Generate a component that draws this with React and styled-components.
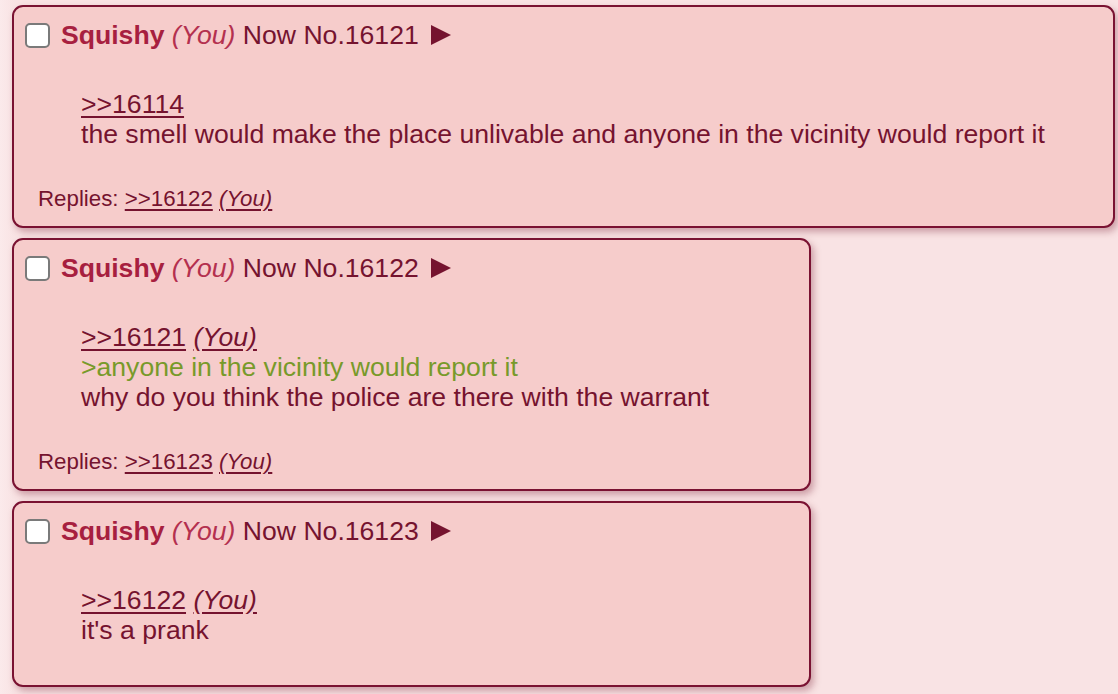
import React from "react";
import styled, { createGlobalStyle } from "styled-components";

const GlobalStyle = createGlobalStyle`
  html, body {
    margin: 0;
    padding: 0;
    background: #f9e3e4;
  }
  body {
    font-family: "Liberation Sans", Arial, sans-serif;
    color: #75132f;
  }
`;

const Thread = styled.main`
  display: flex;
  flex-direction: column;
  align-items: flex-start;
  gap: 10px;
  min-height: 100vh;
  box-sizing: border-box;
  padding: 5px 0 20px 12px;
  background: linear-gradient(90deg, #fbeaeb 0, #f9e3e4 14px);
`;

const Post = styled.article`
  box-sizing: border-box;
  width: fit-content;
  min-width: 799px;
  max-width: 1103px;
  padding: 13px 68px 14px 11px;
  background: #f6cccb;
  border: 2px solid #7a1232;
  border-radius: 11px;
  box-shadow: 3px 4px 7px rgba(120, 30, 50, 0.35);
`;

const Header = styled.header`
  display: flex;
  align-items: center;
  height: 30px;
  font-size: 26.6px;
  line-height: 30px;
  white-space: nowrap;
`;

const Check = styled.span`
  display: inline-block;
  box-sizing: border-box;
  width: 25px;
  height: 25px;
  margin-right: 11px;
  background: #fff;
  border: 2px solid #7a7a7a;
  border-radius: 5px;
`;

const Name = styled.b`
  color: #a71f40;
  font-weight: bold;
`;

const You = styled.i`
  color: ${({ dim }) => (dim ? "#b4304f" : "inherit")};
  text-decoration: ${({ link }) => (link ? "underline" : "none")};
  text-underline-offset: 3px;
`;

const Arrow = styled.svg`
  margin-left: 12px;
  flex: none;
`;

const Body = styled.blockquote`
  margin: 39px 0 26px 56px;
  font-size: 26.6px;
  line-height: 30px;
  white-space: nowrap;
`;

const Line = styled.div`
  color: ${({ quote }) => (quote ? "#789a2a" : "inherit")};
`;

const QuoteLink = styled.a`
  color: #75132f;
  text-decoration: underline;
  text-underline-offset: 3px;
  text-decoration-thickness: 2px;
`;

/* top margin collapses with the quote's bottom margin */
const Replies = styled.footer`
  margin: 37px 0 0 13px;
  font-size: 22.3px;
  line-height: 26px;
  white-space: nowrap;

  a, i {
    text-decoration-thickness: 1.5px;
  }
`;

const posts = [
  {
    no: 16121,
    quote: ">>16114",
    quoteYou: false,
    lines: [{ text: "the smell would make the place unlivable and anyone in the vicinity would report it" }],
    reply: ">>16122",
  },
  {
    no: 16122,
    quote: ">>16121",
    quoteYou: true,
    lines: [
      { text: ">anyone in the vicinity would report it", green: true },
      { text: "why do you think the police are there with the warrant" },
    ],
    reply: ">>16123",
  },
  {
    no: 16123,
    quote: ">>16122",
    quoteYou: true,
    lines: [{ text: "it's a prank" }],
  },
];

const PostCard = ({ post }) => (
  <Post>
    <Header>
      <Check />
      <Name>Squishy</Name>&nbsp;<You dim>(You)</You>&nbsp;Now No.{post.no}
      <Arrow width="20" height="20" viewBox="0 0 20 20">
        <polygon points="0,0 20,10 0,20" fill="#75132f" />
      </Arrow>
    </Header>
    <Body>
      <Line>
        <QuoteLink>{post.quote}</QuoteLink>
        {post.quoteYou && (
          <>
            {" "}
            <You link>(You)</You>
          </>
        )}
      </Line>
      {post.lines.map((l, i) => (
        <Line key={i} quote={l.green}>
          {l.text}
        </Line>
      ))}
    </Body>
    {post.reply && (
      <Replies>
        Replies: <QuoteLink>{post.reply}</QuoteLink> <You link>(You)</You>
      </Replies>
    )}
  </Post>
);

const App = () => (
  <>
    <GlobalStyle />
    <Thread>
      {posts.map((p) => (
        <PostCard key={p.no} post={p} />
      ))}
    </Thread>
  </>
);

export default App;
